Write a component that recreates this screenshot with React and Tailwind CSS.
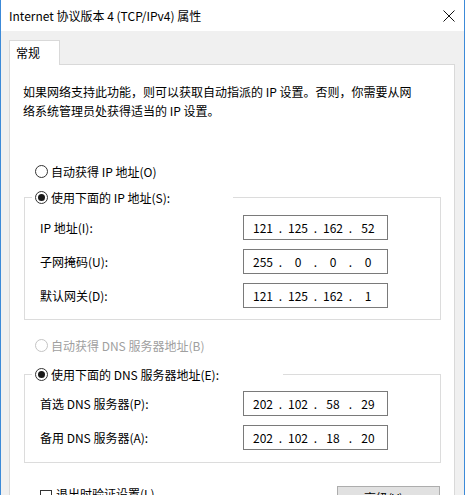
import React from "react";

const FONT = { fontFamily: '"Noto Sans CJK SC", "Noto Sans", sans-serif' };

function Radio({ checked, disabled }) {
  return (
    <span
      className={
        "flex h-[13px] w-[13px] shrink-0 items-center justify-center rounded-full border bg-white " +
        (disabled ? "border-[#c4c4c4]" : "border-[#333333]")
      }
    >
      {checked ? <span className="h-[7px] w-[7px] rounded-full bg-[#1a1a1a]" /> : null}
    </span>
  );
}

function IpBox({ parts }) {
  return (
    <div className="flex h-[25px] w-[145px] shrink-0 items-center border border-[#7a7a7a] bg-white pl-[5px] text-[12px] leading-[23px] text-black">
      {parts.map((p, i) => (
        <React.Fragment key={i}>
          {i > 0 ? <span className="w-[7px] text-center">.</span> : null}
          <span className="w-[28px] text-center">{p}</span>
        </React.Fragment>
      ))}
    </div>
  );
}

function Row({ label, parts }) {
  return (
    <div className="flex h-[25px] items-center pl-[15px]">
      <span className="w-[203px] text-[12px] leading-[19px]">{label}</span>
      <IpBox parts={parts} />
    </div>
  );
}

export default function App() {
  return (
    <div
      className="h-[495px] w-[465px] overflow-hidden border-x border-[#3c8ad8] bg-[#f0f0f0] text-black"
      style={FONT}
    >
      <div className="flex h-[31px] items-center justify-between bg-white pl-[8px] pr-[9px]">
        <span className="text-[12px] leading-[19px]">Internet 协议版本 4 (TCP/IPv4) 属性</span>
        <svg width="12" height="12" viewBox="0 0 12 12">
          <path d="M0.5 0.5 L11.5 11.5 M11.5 0.5 L0.5 11.5" stroke="#111" strokeWidth="1" />
        </svg>
      </div>
      <div className="pl-[8px] pr-[9px] pt-[9px]">
        <div className="relative z-10 flex h-[25px] w-[51px] items-start border-x border-t border-[#d9d9d9] bg-white pl-[6px] pt-[2px] text-[12px] leading-[19px]">
          常规
        </div>
        <div className="-mt-px h-[460px] border border-[#d9d9d9] bg-white">
          <p className="ml-[13px] mt-[17px] whitespace-nowrap text-[12px] leading-[19px]">
            如果网络支持此功能，则可以获取自动指派的 IP 设置。否则，你需要从网
            <br />
            络系统管理员处获得适当的 IP 设置。
          </p>
          <div className="ml-[25px] mt-[42px] flex h-[19px] items-center gap-[3px] text-[12px]">
            <Radio />
            <span>自动获得 IP 地址(O)</span>
          </div>
          <fieldset className="ml-[14px] mr-[13px] mt-[7px] border border-[#dcdcdc] pb-[11px]">
            <legend className="ml-[7px] flex h-[19px] w-[201px] items-center gap-[3px] bg-white pl-[3px] text-[12px]">
              <Radio checked />
              <span>使用下面的 IP 地址(S):</span>
            </legend>
            <div className="mt-[8px] flex flex-col gap-[9px]">
              <Row label="IP 地址(I):" parts={["121", "125", "162", "52"]} />
              <Row label="子网掩码(U):" parts={["255", "0", "0", "0"]} />
              <Row label="默认网关(D):" parts={["121", "125", "162", "1"]} />
            </div>
          </fieldset>
          <div className="ml-[25px] mt-[16px] flex h-[19px] items-center gap-[3px] text-[12px] text-[#a0a0a0]">
            <Radio disabled />
            <span>自动获得 DNS 服务器地址(B)</span>
          </div>
          <fieldset className="ml-[14px] mr-[13px] mt-[10px] border border-[#dcdcdc] pb-[12px]">
            <legend className="ml-[7px] flex h-[19px] w-[251px] items-center gap-[3px] bg-white pl-[3px] text-[12px]">
              <Radio checked />
              <span>使用下面的 DNS 服务器地址(E):</span>
            </legend>
            <div className="mt-[7px] flex flex-col gap-[9px]">
              <Row label="首选 DNS 服务器(P):" parts={["202", "102", "58", "29"]} />
              <Row label="备用 DNS 服务器(A):" parts={["202", "102", "18", "20"]} />
            </div>
          </fieldset>
          <div className="mt-[23px] flex items-start justify-between pl-[30px] pr-[14px]">
            <div className="mt-[2px] flex items-center gap-[4px] text-[12px] leading-[19px]">
              <span className="h-[12px] w-[12px] border border-[#333333] bg-white" />
              <span className="-mt-[4px]">退出时验证设置(L)</span>
            </div>
            <div className="flex h-[23px] w-[103px] items-center justify-center border border-[#adadad] bg-[#e1e1e1] text-[12px] leading-[19px]">
              高级(V)...
            </div>
          </div>
        </div>
      </div>
    </div>
  );
}
